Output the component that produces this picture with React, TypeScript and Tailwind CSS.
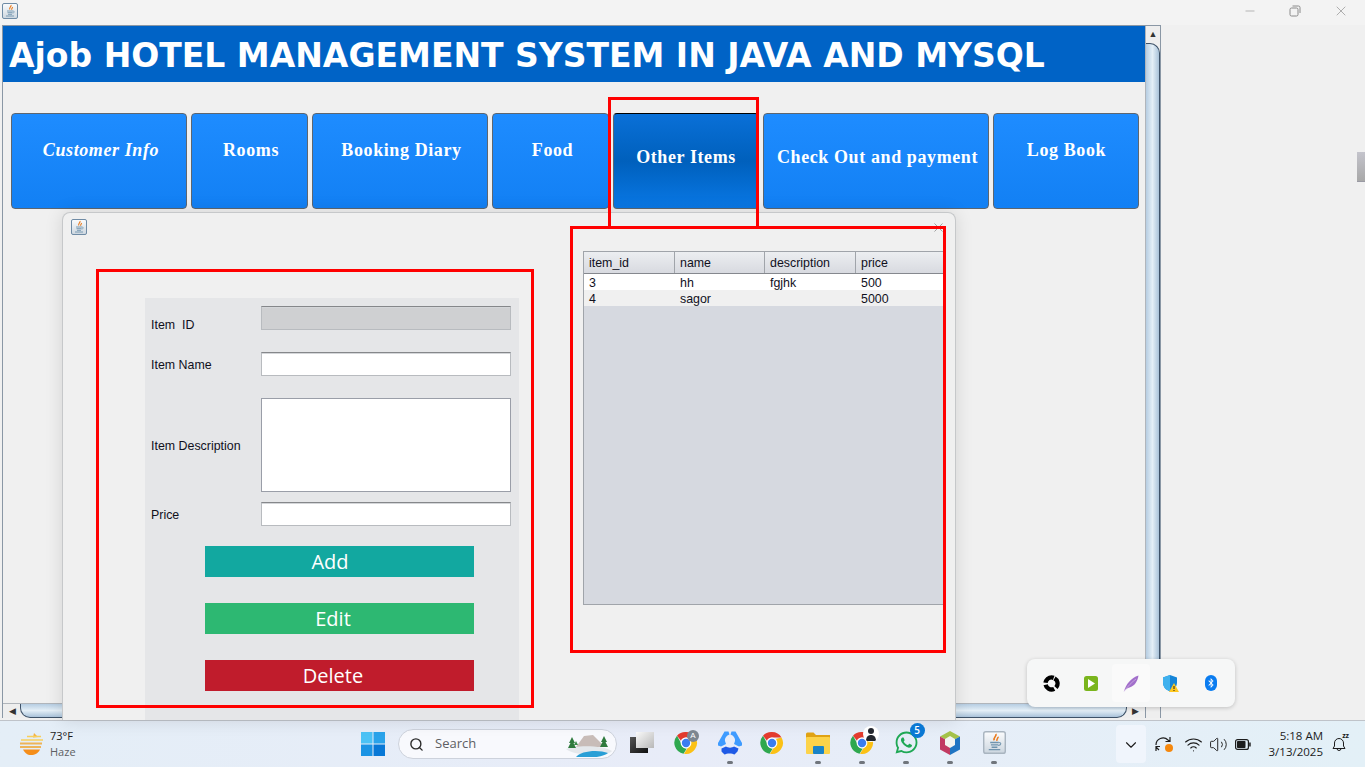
import { ChevronDown, Search, Volume2, Wifi, X, Minus } from "lucide-react";
import { FaWhatsapp, FaBluetoothB } from "react-icons/fa";

const navItems = [
  { label: "Customer Info", width: "w-[176px]", text: "italic pb-[22px] pl-[4px]" },
  { label: "Rooms", width: "w-[117px]", text: "pb-[22px] pl-[3px]" },
  { label: "Booking Diary", width: "w-[176px]", text: "pb-[22px] pl-[3px]" },
  { label: "Food", width: "w-[117px]", text: "pb-[22px] pl-[4px]" },
  { label: "Other Items", width: "w-[146px]", text: "pb-[8px]", active: true },
  { label: "Check Out and payment", width: "w-[226px]", text: "pb-[8px] pl-[3px]" },
  { label: "Log Book", width: "w-[146px]", text: "pb-[22px] pl-[1px]" },
];

const rows = [
  { id: "3", name: "hh", description: "fgjhk", price: "500" },
  { id: "4", name: "sagor", description: "", price: "5000" },
];

const JavaIcon = ({ size = 16 }: { size?: number }) => (
  <svg width={size} height={size} viewBox="0 0 16 16">
    <defs>
      <linearGradient id="javaTile" x1="0" y1="0" x2="0" y2="1">
        <stop offset="0" stopColor="#fbfcfd" />
        <stop offset="1" stopColor="#ccd6df" />
      </linearGradient>
    </defs>
    <rect x="0.5" y="0.5" width="15" height="15" rx="1.5" fill="url(#javaTile)" stroke={size > 16 ? "#a9b5c0" : "#6f8ba5"} />
    <path d="M9 2c.8 1.500-2.200 2.500-1.200 4.500M10.500 4c.3 1-1.400 1.500-.7 2.800" fill="none" stroke="#ea7a1c" strokeWidth="1.100" />
    <path d="M5 8h6M5.500 9.700h5M6 11.300h4M4 13h8" stroke="#6f93ad" strokeWidth=".9" />
    <path d="M11 8c2 0 1.800 2-.5 2" fill="none" stroke="#6f93ad" strokeWidth=".7" />
  </svg>
);

const Chrome = () => (
  <svg width="24" height="24" viewBox="0 0 24 24">
    <path d="M12 1a11 11 0 0 1 9.500 5.500H12a5.500 5.500 0 0 0-5 3.200L3 4.700A11 11 0 0 1 12 1z" fill="#e33b2e" />
    <path d="M3 4.700l4.800 8.800a5 5 0 0 0 5 3.900L9.500 22.700A11 11 0 0 1 3 4.700z" fill="#2fa84f" />
    <path d="M21.500 6.500A11 11 0 0 1 10 22.800l5.800-9.300A5 5 0 0 0 15.500 8z" fill="#fbc116" />
    <circle cx="12" cy="12" r="5.400" fill="#fff" />
    <circle cx="12" cy="12" r="4.200" fill="#3b7df0" />
  </svg>
);

const BlueLogo = () => (
  <svg width="24" height="24" viewBox="0 0 24 24">
    <path d="M6.500.5H10.500l1 3c-3 1-5 4-4.500 6.500l1 3-5 2.500-3-1L0 12z" fill="#3e9bff" />
    <path d="M17.500.5H13.500l-1 3c3 1 5 4 4.500 6.500l-1 3 5 2.500 3-1L24 12z" fill="#3e9bff" />
    <path d="M3.500 17.500l4.500-2c2 1.500 6 1.500 8 0l4.500 2-1 3-3 3c-2-1.500-8-1.500-10 0l-3-3z" fill="#1f5ae6" />
  </svg>
);

const TrayRing = () => (
  <svg width="17" height="17" viewBox="0 0 17 17" fill="none">
    <circle cx="8.500" cy="8.500" r="6" stroke="#000" strokeWidth="4.400" strokeDasharray="10.600 2" transform="rotate(-60 8.500 8.500)" />
  </svg>
);

const TaskIcon = ({ children, dot, shift }: { children: React.ReactNode; dot?: boolean; shift?: string }) => (
  <div className={`relative flex h-[47px] w-[44px] items-center justify-center pb-[3px] ${shift ?? ""}`}>
    {children}
    {dot && <span className="absolute bottom-[4px] left-[19px] h-[3px] w-[6px] rounded-full bg-[#70757c]" />}
  </div>
);

const TextField = ({ disabled }: { disabled?: boolean }) => (
  <div
    className={`h-[24px] w-[250px] border border-[#b8bbbf] border-t-[#85878a] shadow-[inset_0_1px_0_#d4d6d9] ${
      disabled ? "bg-[#cfd0d2]" : "bg-white"
    }`}
  />
);

const ActionButton = ({ label, color, shift }: { label: string; color: string; shift: string }) => (
  <div className={`flex h-[31px] w-[269px] items-center justify-center font-['Open_Sans',sans-serif] text-[20px] text-white ${color} ${shift}`}>
    {label}
  </div>
);

export default function App() {
  return (
    <div className="relative flex h-[767px] w-[1365px] flex-col overflow-hidden bg-[#f0f0f0] font-['Liberation_Sans',sans-serif]">
      {/* title bar */}
      <div className="flex h-[25px] shrink-0 items-start justify-between bg-[#f3f3f3] pl-[2px] pt-[3px]">
        <JavaIcon />
        <div className="flex items-center gap-[32px] pr-[16px] text-[#8a8a8a]">
          <Minus size={14} strokeWidth={1} />
          <svg width="12" height="12" viewBox="0 0 12 12" fill="none" stroke="#8a8a8a">
            <rect x="1" y="3" width="8" height="8" rx="1.500" />
            <path d="M3.500 1H9.500a1.500 1.500 0 0 1 1.500 1.500V8" />
          </svg>
          <X size={16} strokeWidth={1} />
        </div>
      </div>

      {/* main window */}
      <div className="h-[695px] shrink-0 pl-[2px]">
        <div className="flex h-[693px] w-[1159px] flex-col border border-b-0 border-[#8a97a5]">
          <div className="flex min-h-0 flex-1">
            <div className="flex-1">
              <div className="flex h-[56px] items-center bg-[#0063c6] pl-[6px] pt-[3px] font-['DejaVu_Sans',sans-serif] text-[33px] font-bold text-white">
                Ajob HOTEL MANAGEMENT SYSTEM IN JAVA AND MYSQL
              </div>
              <div className="ml-[8px] mt-[31px] flex gap-[4px]">
                {navItems.map((item) => (
                  <div
                    key={item.label}
                    className={`flex h-[96px] items-center justify-center rounded-[4px] border border-[#5d6670] font-['Liberation_Serif',serif] text-[18px] font-bold tracking-[0.6px] text-white ${item.width} ${item.text} ${
                      item.active
                        ? "border-t-black bg-gradient-to-b from-[#0a70d8] via-[#0060bc] to-[#0a78e6]"
                        : "bg-gradient-to-b from-[#1e8cff] to-[#1280f4]"
                    }`}
                  >
                    {item.label}
                  </div>
                ))}
              </div>
            </div>
            {/* vertical scrollbar */}
            <div className="flex w-[15px] flex-col border-l border-[#b0b5bb] bg-[#eeeeee]">
              <div className="flex h-[17px] items-center justify-center text-[9px] leading-none text-[#333]">▲</div>
              <div className="h-[640px] rounded-tr-[10px] border-r border-t border-[#3e5268] bg-gradient-to-r from-[#b6cde2] via-[#e4eff7] to-[#a9c2d9]" />
            </div>
          </div>
          {/* horizontal scrollbar */}
          <div className="flex h-[15px] items-center border-t border-[#b0b5bb] bg-[#eeeeee]">
            <div className="w-[17px] pl-[6px] text-[9px] leading-none text-[#333]">◀</div>
            <div className="h-[14px] w-[1107px] rounded-b-[10px] border-b border-l border-r border-[#3e5268] bg-gradient-to-b from-[#b6cde2] via-[#e4eff7] to-[#a9c2d9]" />
            <div className="ml-[5px] text-[9px] leading-none text-[#333]">▶</div>
            <div className="ml-auto h-full w-[15px] border-l border-[#8a97a5]" />
          </div>
        </div>
      </div>

      {/* dialog window */}
      <div className="absolute left-[62px] top-[212px] h-[508px] w-[894px] overflow-hidden rounded-t-[8px] border border-b-0 border-[#c6c8ca] bg-[#f0f0f0] shadow-[0_0_18px_rgba(0,0,0,0.12)]">
        <div className="flex h-[30px] items-start justify-between pl-[8px] pr-[9px] pt-[6px]">
          <JavaIcon />
          <X size={15} strokeWidth={1.300} className="mt-[1px] text-[#8e8e8e]" />
        </div>
        <div className="flex items-start">
          <div className="ml-[82px] mt-[55px] h-[430px] w-[374px] bg-[#e5e6e8] pt-[8px] text-[12.400px] text-[#10101c]">
            <div className="flex h-[24px] pl-[6px]">
              <span className="w-[110px] pt-[10px]">Item&nbsp; ID</span>
              <TextField disabled />
            </div>
            <div className="mt-[22px] flex h-[24px] items-center pl-[6px]">
              <span className="w-[110px] pt-[2px]">Item Name</span>
              <TextField />
            </div>
            <div className="mt-[22px] flex h-[94px] items-center pl-[6px]">
              <span className="w-[110px] pt-[2px]">Item Description</span>
              <div className="h-[94px] w-[250px] border border-[#9a9ea8] bg-white" />
            </div>
            <div className="mt-[10px] flex h-[24px] items-center pl-[6px]">
              <span className="w-[110px] pt-[2px]">Price</span>
              <TextField />
            </div>
            <div className="ml-[60px] mt-[20px] flex flex-col gap-[26px]">
              <ActionButton label="Add" color="bg-[#12a8a0]" shift="pr-[19px] pt-[1px]" />
              <ActionButton label="Edit" color="bg-[#2db872]" shift="pr-[13px] pt-[1px]" />
              <ActionButton label="Delete" color="bg-[#c01c2c]" shift="pr-[13px]" />
            </div>
          </div>
          <div className="ml-[64px] mt-[8px] h-[354px] w-[363px] border border-[#a0a4aa] bg-[#d6d9e0] text-[12.400px] text-[#10101c]">
            <div className="grid h-[22px] grid-cols-[91px_90px_91px_1fr] border-b border-[#85888e] bg-gradient-to-b from-[#eceef1] to-[#d8dae0]">
              {["item_id", "name", "description", "price"].map((col) => (
                <div key={col} className="flex items-center border-r border-[#a0a4aa] pl-[5px] pt-[2px] last:border-r-0">
                  {col}
                </div>
              ))}
            </div>
            {rows.map((row, i) => (
              <div key={row.id} className={`grid h-[16px] grid-cols-[91px_90px_91px_1fr] items-center pl-[5px] ${i === 0 ? "bg-white" : "bg-[#f0f0f0]"}`}>
                <span>{row.id}</span>
                <span>{row.name}</span>
                <span>{row.description}</span>
                <span>{row.price}</span>
              </div>
            ))}
          </div>
        </div>
      </div>

      {/* annotations */}
      <div className="absolute left-[608px] top-[97px] h-[132px] w-[151px] border-[3px] border-[#ff0000]" />
      <div className="absolute left-[96px] top-[269px] h-[439px] w-[438px] border-[3px] border-[#ff0000]" />
      <div className="absolute left-[570px] top-[226px] h-[427px] w-[376px] border-[3px] border-[#ff0000]" />

      {/* stray scrollbar at the right edge */}
      <div className="absolute left-[1357px] top-[152px] h-[30px] w-[8px] border-b border-[#9a9aa4] bg-gradient-to-b from-[#c4c4cc] to-[#a8a8a8]" />

      {/* tray overflow flyout */}
      <div className="absolute left-[1027px] top-[659px] z-10 flex h-[48px] w-[208px] items-center gap-[2px] rounded-[8px] bg-[#f6f7f7] pl-[5px] shadow-[0_1px_4px_rgba(0,0,0,0.2)]">
        <div className="flex h-[38px] w-[38px] items-center justify-center">
          <TrayRing />
        </div>
        <div className="flex h-[38px] w-[38px] items-center justify-center">
          <svg width="14" height="15" viewBox="0 0 14 15">
            <rect width="14" height="15" rx="2.500" fill="#7ab51d" />
            <path d="M4 3v9l7-4.500z" fill="#fff" />
          </svg>
        </div>
        <div className="flex h-[38px] w-[38px] items-center justify-center rounded-[4px] bg-[#fafafa]">
          <svg width="16" height="17" viewBox="0 0 16 17">
            <path d="M1 16.500C3 9 8 3 15.500.5c-1 6-4 10.500-9 12-2 .500-4 2-5.500 4z" fill="#a26fcb" />
            <path d="M1 16.500C5 11 9 7 13 4" stroke="#d9c5ea" strokeWidth=".6" fill="none" />
          </svg>
        </div>
        <div className="flex h-[38px] w-[38px] items-center justify-center">
          <svg width="16" height="17" viewBox="0 0 16 17">
            <path d="M7 0l7 2.500v5C14 12 11 15 7 16.500 3 15 0 12 0 7.500v-5z" fill="#1585d8" />
            <path d="M7 0v16.500C3 15 0 12 0 7.500v-5z" fill="#3fb1ee" />
            <path d="M11 8l5 9H6z" fill="#ffc81e" />
            <path d="M11 11v3M11 15v1" stroke="#222" strokeWidth="1" />
          </svg>
        </div>
        <div className="flex h-[38px] w-[38px] items-center justify-center">
          <div className="flex h-[16px] w-[12px] items-center justify-center rounded-[6px] bg-[#0a7cf0] text-white">
            <FaBluetoothB size={10} />
          </div>
        </div>
      </div>

      {/* taskbar */}
      <div className="flex h-[47px] shrink-0 items-center border-t border-[#bfc3c9] bg-gradient-to-r from-[#e4eef7] via-[#e8ecf8] to-[#e3f0f7]">
        <div className="flex w-[361px] items-center pl-[19px] font-['Open_Sans',sans-serif]">
          <svg width="24" height="22" viewBox="0 0 24 22">
            <path d="M15 0l4 4-5 .500z" fill="#f5b041" />
            <path d="M8 3.500h14M2 7h22" stroke="#f7cf5c" strokeWidth="1.500" />
            <path d="M1 10.500h22M1 14h21" stroke="#edb458" strokeWidth="1.800" />
            <path d="M4 16.500h17C19 20.500 16 22 12 22s-6-2-8-5.500z" fill="#f58e1a" />
          </svg>
          <div className="ml-[7px] flex flex-col text-[11px] leading-[16px]">
            <span className="text-[#1c1c1c]">73°F</span>
            <span className="text-[#5e5f63]">Haze</span>
          </div>
        </div>
        <svg width="24" height="24" viewBox="0 0 24 24" className="mb-[1px]">
          <rect x="0" y="0" width="11.500" height="11.500" fill="#4cc2f5" />
          <rect x="12.500" y="0" width="11.500" height="11.500" fill="#2aa3ea" />
          <rect x="0" y="12.500" width="11.500" height="11.500" fill="#1b94e4" />
          <rect x="12.500" y="12.500" width="11.500" height="11.500" fill="#0878d6" />
        </svg>
        <div className="ml-[13px] flex h-[30px] w-[219px] items-center rounded-full border border-[#cdd2dc] bg-[#f8f9fd] pl-[10px] font-['Open_Sans',sans-serif] text-[13px] text-[#5e5f63]">
          <Search size={15} strokeWidth={2.200} className="text-[#2a2a2a]" />
          <span className="ml-[11px] flex-1">Search</span>
          <svg width="46" height="26" viewBox="0 0 46 26" className="mr-[4px]">
            <path d="M10 16l8-11 9-1 6 6 6 6z" fill="#c8bcb8" />
            <path d="M0 18c8-4 38-4 46 2-2 5-36 6-46-2z" fill="#e4e8ec" />
            <path d="M10 26c4-6 22-8 32-4-4 4-20 6-32 4z" fill="#2a9fd6" />
            <path d="M6 6l3 6H7.500l2.500 5H2l2.500-5H3z" fill="#2f7a3d" />
            <path d="M38 5l3 6h-1.500l2.500 5h-8l2.500-5H35z" fill="#2f7a3d" />
            <path d="M10 10l2 4h-4z" fill="#3b8a4a" />
          </svg>
        </div>
        <div className="ml-[1px] flex">
          <div className="flex h-[47px] w-[46px] items-center pb-[3px] pl-[12px]">
            <div className="relative h-[21px] w-[24px]">
              <div className="absolute bottom-0 left-0 h-[16px] w-[18px] bg-gradient-to-br from-[#555] to-[#111]" />
              <div className="absolute right-0 top-0 h-[16px] w-[18px] bg-gradient-to-br from-[#fafafa] to-[#b8b8b8]" />
            </div>
          </div>
          <TaskIcon>
            <div className="relative">
              <Chrome />
              <span className="absolute -right-[1px] -top-[1px] flex h-[12px] w-[12px] items-center justify-center rounded-full bg-[#7d8690] text-[8px] text-white">A</span>
            </div>
          </TaskIcon>
          <TaskIcon dot>
            <BlueLogo />
          </TaskIcon>
          <TaskIcon shift="pr-[4px]">
            <Chrome />
          </TaskIcon>
          <TaskIcon dot>
            <svg width="24" height="22" viewBox="0 0 24 22">
              <path d="M0 2a1.500 1.500 0 0 1 1.500-1.500h6L10 3h14v3H0z" fill="#e0a214" />
              <rect y="5" width="24" height="17" rx="1" fill="#fcd34a" />
              <rect x="7" y="14" width="11" height="8" rx="1" fill="#1a84c8" />
            </svg>
          </TaskIcon>
          <TaskIcon dot>
            <div className="relative">
              <Chrome />
              <span className="absolute -right-[5px] -top-[5px] flex h-[16px] w-[16px] items-center justify-center overflow-hidden rounded-full bg-white">
                <svg width="14" height="14" viewBox="0 0 14 14" fill="#23272f">
                  <circle cx="7" cy="4" r="3" />
                  <path d="M2 14c0-4 2-6 5-6s5 2 5 6z" />
                </svg>
              </span>
            </div>
          </TaskIcon>
          <TaskIcon dot>
            <div className="relative">
              <FaWhatsapp size={25} className="text-[#1fa855]" />
              <span className="absolute -right-[6px] -top-[7px] flex h-[15px] w-[15px] items-center justify-center rounded-full bg-[#0a78d4] font-['Open_Sans',sans-serif] text-[10px] font-semibold text-white">5</span>
            </div>
          </TaskIcon>
          <TaskIcon dot>
            <svg width="22" height="24" viewBox="0 0 22 24">
              <path d="M11 0l10 5.500L11 11 1 5.500z" fill="#a4c24a" />
              <path d="M1 5.500L11 11v13L1 18.500z" fill="#c23a62" />
              <path d="M21 5.500L11 11v13l10-5.500z" fill="#1f74c2" />
              <path d="M11 5l5 3v6l-5 3-5-3V8z" fill="#f2f4f0" />
            </svg>
          </TaskIcon>
          <TaskIcon dot>
            <JavaIcon size={23} />
          </TaskIcon>
        </div>
        {/* system tray */}
        <div className="ml-[100px] flex h-[38px] w-[30px] items-center justify-center rounded-[4px] bg-[#f0f5fc] pt-[1px]">
          <ChevronDown size={18} strokeWidth={1.500} className="text-[#1c1c1c]" />
        </div>
        <div className="relative ml-[8px] h-[18px] w-[18px]">
          <svg width="18" height="18" viewBox="0 0 18 18" fill="none" stroke="#1f1f1f" strokeWidth="1.200">
            <path d="M2 10a7 7 0 0 1 12-5l2 1.500M16 2v4.500h-4.500" />
            <path d="M2 16v-4.500h4M2 12l3 3" />
          </svg>
          <span className="absolute bottom-[1px] right-[-1px] h-[8px] w-[8px] rounded-full bg-[#f5880e]" />
        </div>
        <Wifi size={19} strokeWidth={1.400} className="ml-[12px] text-[#1c1c1c]" />
        <Volume2 size={19} strokeWidth={1.200} className="ml-[6px] text-[#1c1c1c]" />
        <svg width="16" height="11" viewBox="0 0 16 11" className="ml-[7px]">
          <rect x=".6" y=".6" width="12.800" height="9.800" rx="2" fill="none" stroke="#1c1c1c" strokeWidth="1.200" />
          <rect x="2" y="2" width="8.500" height="7" rx=".8" fill="#1c1c1c" />
          <rect x="14.200" y="3.500" width="1.500" height="4" fill="#1c1c1c" />
        </svg>
        <div className="ml-[8px] flex w-[64px] flex-col items-end font-['Open_Sans',sans-serif] text-[11.500px] leading-[16px] text-[#1c1c1c]">
          <span>5:18 AM</span>
          <span>3/13/2025</span>
        </div>
        <div className="relative ml-[9px] h-[16px] w-[14px]">
          <svg width="14" height="16" viewBox="0 0 14 16" fill="none" stroke="#1c1c1c" strokeWidth="1">
            <path d="M1 12.500l1.500-2.500V7a4.500 4.500 0 0 1 9 0v3l1.500 2.500zM5 12.500a2 2 0 0 0 4 0" />
          </svg>
          <span className="absolute -right-[3px] -top-[4px] bg-[#e3f0f7] font-['Open_Sans',sans-serif] text-[7px] font-bold leading-none text-[#1c1c1c]">zz</span>
        </div>
      </div>
    </div>
  );
}
